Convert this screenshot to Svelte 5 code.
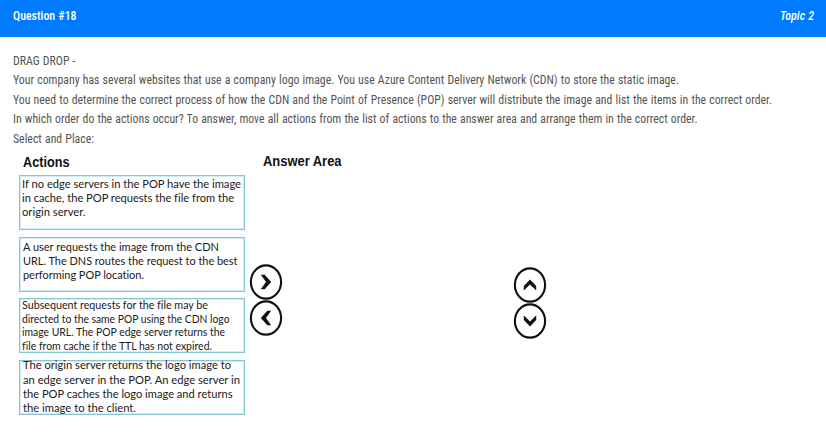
<script>
  const intro = [
    { text: 'DRAG DROP -', w: 62.5, h: 19 },
    { text: 'Your company has several websites that use a company logo image. You use Azure Content Delivery Network (CDN) to store the static image.', w: 666, h: 20 },
    { text: 'You need to determine the correct process of how the CDN and the Point of Presence (POP) server will distribute the image and list the items in the correct order.', w: 759, h: 19 },
    { text: 'In which order do the actions occur? To answer, move all actions from the list of actions to the answer area and arrange them in the correct order.', w: 684.5, h: 20 },
    { text: 'Select and Place:', w: 81, h: 19 }
  ];

  const actions = [
    { left: 1, top: 0, pitch: 14.2, lines: [
      ['If no edge servers in the POP have the image', 219],
      ['in cache, the POP requests the file from the', 212],
      ['origin server.', 63.5]
    ] },
    { left: 2.5, top: 1, pitch: 14.2, lines: [
      ['A user requests the image from the CDN', 196],
      ['URL. The DNS routes the request to the best', 214.5],
      ['performing POP location.', 121]
    ] },
    { left: 1.7, top: -1.6, pitch: 13.5, lines: [
      ['Subsequent requests for the file may be', 186],
      ['directed to the same POP using the CDN logo', 207.5],
      ['image URL. The POP edge server returns the', 203],
      ['file from cache if the TTL has not expired.', 190]
    ] },
    { left: 2.4, top: -3.2, pitch: 14.3, lines: [
      ['The origin server returns the logo image to', 208],
      ['an edge server in the POP. An edge server in', 217],
      ['the POP caches the logo image and returns', 209.5],
      ['the image to the client.', 113]
    ] }
  ];
</script>

{#snippet line(text, width, height, baseline)}
  <svg class="line" {width} {height}>
    <text x="0" y={baseline} textLength={width} lengthAdjust="spacingAndGlyphs">{text}</text>
  </svg>
{/snippet}

{#snippet round(label, points)}
  <button aria-label={label}>
    <svg width="34" height="36" viewBox="0 0 34 36">
      <ellipse cx="17" cy="18" rx="15.1" ry="16.6" />
      <polygon {points} />
    </svg>
  </button>
{/snippet}

<main>
  <header>
    <span>{@render line('Question #18', 63.5, 18, 14)}</span>
    <em>{@render line('Topic 2', 34, 18, 14)}</em>
  </header>

  <section class="intro">
    {#each intro as row}
      {@render line(row.text, row.w, row.h, 14)}
    {/each}
  </section>

  <section class="board">
    <div class="actions">
      <h2>{@render line('Actions', 46.5, 22, 14.3)}</h2>
      {#each actions as a}
        <div class="card">
          <div class="copy" style="margin: {a.top}px 0 0 {a.left}px">
            {#each a.lines as [text, width]}
              {@render line(text, width, a.pitch, 11.6)}
            {/each}
          </div>
        </div>
      {/each}
    </div>
    <div class="transfer">
      {@render round('Move right', '11.8,10.8 15.7,10.8 22.2,18 15.7,25.2 11.8,25.2 17,18')}
      {@render round('Move left', '22.2,10.8 18.3,10.8 11.8,18 18.3,25.2 22.2,25.2 17,18')}
    </div>
    <div class="answer">
      <h2>{@render line('Answer Area', 78.5, 22, 14.3)}</h2>
    </div>
    <div class="order">
      {@render round('Move up', '10.8,19 17,12.4 23.2,19 23.2,23.6 17,17.6 10.8,23.6')}
      {@render round('Move down', '10.8,17 17,23.6 23.2,17 23.2,12.4 17,18.4 10.8,12.4')}
    </div>
  </section>
</main>

<style>
  :global(body) { margin: 0; background: #fff; }
  main {
    box-sizing: border-box;
    width: 826px;
    height: 432px;
    background: #fff;
    font-family: 'Roboto Condensed', 'Roboto', sans-serif;
  }
  .line { display: block; overflow: visible; flex: none; }
  header {
    box-sizing: border-box;
    display: flex;
    justify-content: space-between;
    height: 37px;
    padding: 6px 12.5px 0 12.5px;
    background: #007bff;
    font-size: 13px;
    font-weight: 500;
    word-spacing: 0.5px;
    fill: #fff;
  }
  .intro {
    padding: 14px 0 0 12.5px;
    height: 102px;
    box-sizing: border-box;
    font-size: 13px;
    word-spacing: 0.5px;
    fill: #555;
  }
  .board {
    display: flex;
    align-items: flex-start;
    padding: 14px 0 0 19px;
    fill: #111;
  }
  h2 {
    margin: 0;
    font: bold 14px 'Liberation Sans', Arial, sans-serif;
  }
  .actions { width: 226px; }
  .actions h2 { padding-left: 4.4px; }
  .card {
    box-sizing: border-box;
    display: flex;
    width: 226px;
    height: 55px;
    margin-bottom: 6.5px;
    border: 1px solid #84c4d3;
    box-shadow: inset 0 0 0 1px #d3edf2;
    font: 11.2px 'Lato', 'Noto Sans', sans-serif;
    font-variant-ligatures: none;
    fill: #202020;
  }
  .copy { padding-left: 0.5px; }
  .transfer, .order { display: flex; flex-direction: column; }
  .transfer { width: 18.5px; padding-top: 111.2px; margin-left: 4px; }
  .answer { width: 249.6px; margin: -1.5px 0 0 -4.1px; }
  .order { padding-top: 113.8px; }
  button {
    display: block;
    width: 34px;
    height: 36px;
    padding: 0;
    border: 0;
    background: none;
  }
  button svg { display: block; }
  ellipse { fill: none; stroke: #111; stroke-width: 2.1; }
  polygon { fill: #111; }
</style>
